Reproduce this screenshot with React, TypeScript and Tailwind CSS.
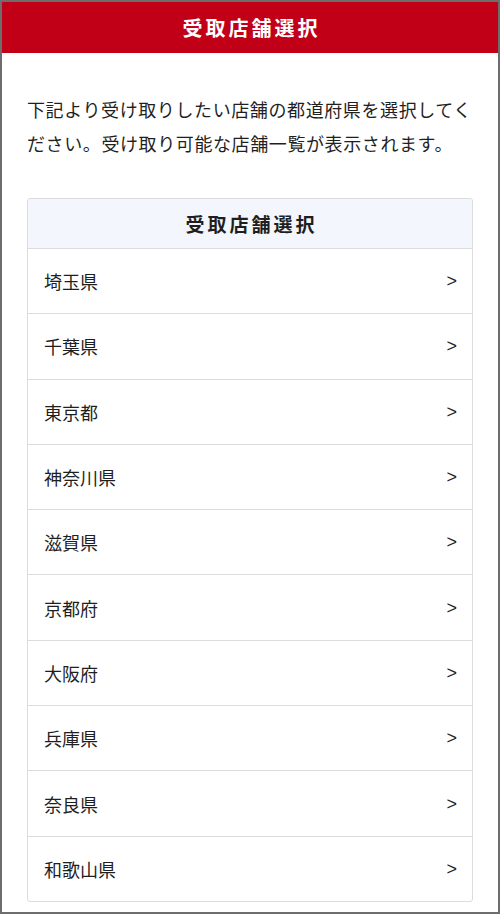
const prefectures: string[] = [
  '埼玉県',
  '千葉県',
  '東京都',
  '神奈川県',
  '滋賀県',
  '京都府',
  '大阪府',
  '兵庫県',
  '奈良県',
  '和歌山県',
];

const fontStack = "font-['Noto_Sans_CJK_JP','Noto_Sans',sans-serif]";

export default function App() {
  const handleSelect = (name: string): void => {
    console.log('select', name);
  };

  return (
    <div className={`w-[500px] h-[914px] overflow-hidden border-2 border-[#6d6d6d] bg-white text-[#1f1f1f] ${fontStack}`}>
      {/* Header */}
      <header className="h-[51px] bg-[#c10018] flex items-center justify-center">
        <h1 className="text-white text-[20px] font-bold tracking-[3px] leading-none pl-[3px]">受取店舗選択</h1>
      </header>

      <main className="px-[25px] pt-[39px]">
        <p className="text-[18px] leading-[34px] tracking-[0.6px]">
          下記より受け取りしたい店舗の都道府県を選択してください。受け取り可能な店舗一覧が表示されます。
        </p>

        {/* Prefecture list */}
        <div className="mt-[38px] rounded-[3px] border border-[#dcdcdc] overflow-hidden">
          <div className="h-[49px] bg-[#f3f6fc] flex items-center justify-center">
            <h2 className="text-[19px] font-bold tracking-[3px] pl-[3px] leading-none">受取店舗選択</h2>
          </div>
          <ul>
            {prefectures.map((name) => (
              <li key={name} className="border-t border-[#dcdcdc]">
                <button
                  type="button"
                  onClick={() => handleSelect(name)}
                  className="w-full h-[64.3px] flex items-center justify-between pl-4 pr-[15px] text-left"
                >
                  <span className="text-[18px] leading-none">{name}</span>
                  <span className="text-[18px] leading-none font-['Liberation_Sans',sans-serif]">&gt;</span>
                </button>
              </li>
            ))}
          </ul>
        </div>
      </main>
    </div>
  );
}
